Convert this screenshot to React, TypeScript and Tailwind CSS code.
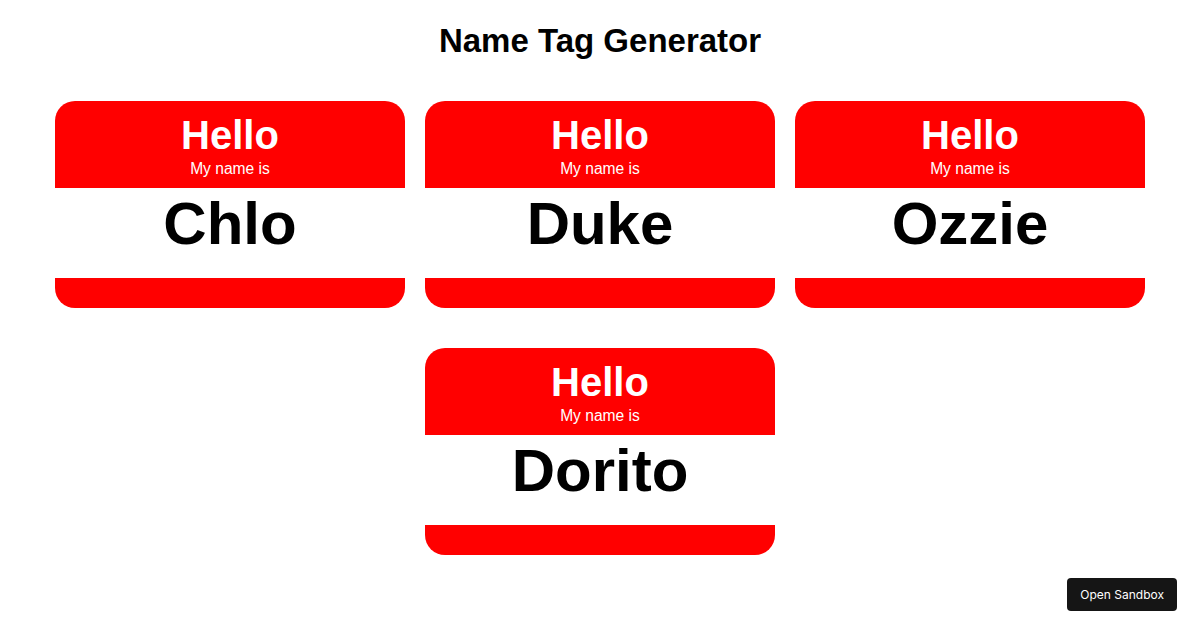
import React from "react";

const names = ["Chlo", "Duke", "Ozzie", "Dorito"];

function NameTag({ name }: { name: string }) {
  return (
    <div className="w-[350px] overflow-hidden rounded-[20px] bg-[#ff0000] text-center">
      <div className="pt-[11px] pb-[10px] text-white">
        <div className="text-[40px] font-bold leading-[46px]">Hello</div>
        <div className="mt-[2px] text-[15.6px] leading-[18px]">My name is</div>
      </div>
      <div className="h-[90px] bg-white pt-[6px]">
        <div className="text-[60px] font-bold leading-[60px] text-black">{name}</div>
      </div>
      <div className="h-[30px]" />
    </div>
  );
}

export default function App() {
  return (
    <div className="relative min-h-[630px] w-full bg-white font-['Liberation_Sans',Arial,sans-serif]">
      <h1 className="pt-[22px] text-center text-[33px] font-bold leading-[37px] text-black">
        Name Tag Generator
      </h1>
      <div className="mt-[42px] flex flex-wrap justify-center gap-x-[20px] gap-y-[40px]">
        {names.map((n) => (
          <NameTag key={n} name={n} />
        ))}
      </div>
      <button className="fixed right-[23px] bottom-[19px] h-[33px] rounded-[4px] bg-[#151515] px-[13px] font-['Inter',sans-serif] text-[12px] text-white">
        Open Sandbox
      </button>
    </div>
  );
}
